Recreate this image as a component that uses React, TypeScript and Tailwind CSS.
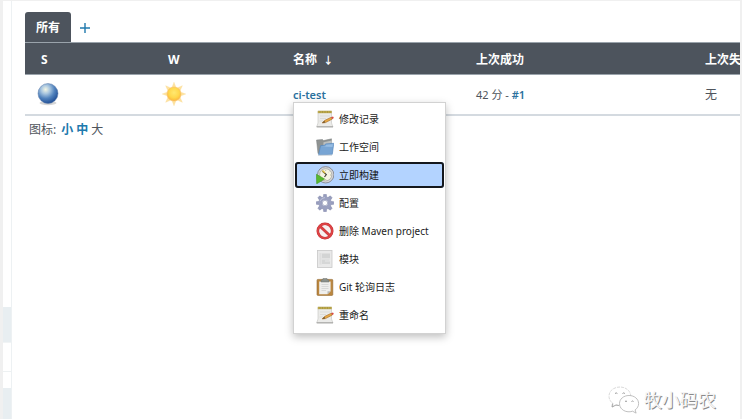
import type { ReactNode } from "react";

function BallIcon() {
  return (
    <svg viewBox="0 0 24 24" className="block size-6" aria-label="成功" role="img">
      <defs>
        <radialGradient id="ball" cx="0.38" cy="0.3" r="0.72">
          <stop offset="0" stopColor="#f3f6e4" />
          <stop offset="0.3" stopColor="#a9c6df" />
          <stop offset="0.62" stopColor="#5283bd" />
          <stop offset="1" stopColor="#1f4d94" />
        </radialGradient>
      </defs>
      <ellipse cx="11" cy="21" rx="8.5" ry="2.2" fill="#000" opacity="0.16" />
      <circle cx="11" cy="11.5" r="10" fill="url(#ball)" stroke="#5a7aa8" strokeWidth="0.5" />
    </svg>
  );
}

function SunIcon() {
  const rays = [0, 45, 90, 135, 180, 225, 270, 315];
  return (
    <svg viewBox="0 0 24 24" className="block size-6" aria-label="晴" role="img">
      <defs>
        <radialGradient id="sun" cx="0.5" cy="0.4" r="0.6">
          <stop offset="0" stopColor="#ffe870" />
          <stop offset="0.6" stopColor="#ffd84d" />
          <stop offset="1" stopColor="#fbb53c" />
        </radialGradient>
      </defs>
      {rays.map((a) => (
        <path key={a} d="M9.9 5.6 12 0.2 14.1 5.6Z" fill="#fde3a0" stroke="#fcd891" strokeWidth="0.3" transform={`rotate(${a} 12 12)`} />
      ))}
      <circle cx="12" cy="12" r="7" fill="url(#sun)" stroke="#f9bf6a" strokeWidth="0.6" />
    </svg>
  );
}

function MenuIcon({ children }: { children: ReactNode }) {
  return (
    <svg viewBox="0 0 18 18" className="size-[18px] shrink-0" aria-hidden="true">
      {children}
    </svg>
  );
}

function NotepadIcon() {
  return (
    <MenuIcon>
      <path d="M2 1.2H15.500V13L17 17H0.600L2 13Z" fill="#ebebe9" stroke="#c2c2bf" strokeWidth="0.6" />
      <path d="M0.800 16.800H17" stroke="#a2a2a0" strokeWidth="1" />
      <rect x="1.800" y="0.800" width="14" height="2.400" fill="#bda94c" />
      <path d="M4 1V3M6.500 1V3M9 1V3M11.500 1V3M14 1V3" stroke="#93843a" strokeWidth="0.5" />
      <path d="M4 6H14M4 8.500H10M3.500 11H7" stroke="#d6d6d3" strokeWidth="0.7" />
      <path d="M6.200 13 8.500 10.500 15.300 7.200 16.400 9 9.500 12.600Z" fill="#e6a743" stroke="#a86a24" strokeWidth="0.6" />
      <path d="M6.200 13 8.300 10.800 9.300 12.600Z" fill="#6b5230" />
      <path d="M15.100 7.300 17 6.500 17.900 8 16.300 9Z" fill="#d84a45" />
    </MenuIcon>
  );
}

function FolderIcon() {
  return (
    <MenuIcon>
      <path d="M0.500 2 6.500 1.500 7.500 2.600 15.500 0.800 15.800 15 2 15.500Z" fill="#8f9392" stroke="#7d8181" strokeWidth="0.5" />
      <path d="M7.500 4.200 15.800 2.600V12H7Z" fill="#bcc0c0" />
      <path d="M4.600 7.600 8.600 7.300 9.600 5.900 17.800 5.300 16.300 16.300 2.600 16.800Z" fill="#78a5d4" stroke="#4f83ba" strokeWidth="0.6" />
      <path d="M5.300 8.500 9.300 8.200 10.200 6.800 16.900 6.200 16.500 9Z" fill="#97bde3" />
      <path d="M2 17.300H16" stroke="#bdc6cf" strokeWidth="0.7" />
    </MenuIcon>
  );
}

function BuildIcon() {
  return (
    <MenuIcon>
      <circle cx="9.700" cy="8.800" r="8.200" fill="#d3d4d8" stroke="#82868e" strokeWidth="0.9" />
      <circle cx="9.700" cy="8.800" r="6.100" fill="#f6f4e2" stroke="#a9a9a4" strokeWidth="0.8" />
      <path d="M9.700 3.800V5M9.700 13V14M14 9H15M13.300 5.500 12.700 6.100" stroke="#9d9d92" strokeWidth="0.7" />
      <path d="M6.500 5.200 10.300 8.500 8.500 11" fill="none" stroke="#4b483c" strokeWidth="1.200" />
      <path d="M6.500 4.500 9 7" stroke="#d9ba38" strokeWidth="1.400" />
      <path d="M0.400 8.300 8.600 13 0.700 17.800Z" fill="#58b82f" stroke="#42981f" strokeWidth="0.6" />
    </MenuIcon>
  );
}

function GearIcon() {
  const teeth = [0, 45, 90, 135, 180, 225, 270, 315];
  return (
    <MenuIcon>
      {teeth.map((a) => (
        <path key={a} d="M7 4 7.700 0.200H10.300L11 4Z" fill="#969cbc" stroke="#7d84a8" strokeWidth="0.4" transform={`rotate(${a} 9 9)`} />
      ))}
      <circle cx="9" cy="9" r="4.700" fill="none" stroke="#9ba1c0" strokeWidth="3.600" />
      <circle cx="9" cy="9" r="2.700" fill="#fff" stroke="#8086a9" strokeWidth="0.6" />
      <path d="M4 7A5.500 5.500 0 0 1 9 3.600" stroke="#bfc3da" fill="none" strokeWidth="1" />
    </MenuIcon>
  );
}

function ForbiddenIcon() {
  return (
    <MenuIcon>
      <circle cx="9" cy="9" r="7.200" fill="#f7f1f1" stroke="#bf2a2e" strokeWidth="2.600" />
      <path d="M4 4.200 14 13.800" stroke="#bf2a2e" strokeWidth="2.600" />
      <circle cx="9" cy="9" r="7.200" fill="none" stroke="#de4446" strokeWidth="1.800" />
      <path d="M4 4.200 14 13.800" stroke="#de4446" strokeWidth="1.800" />
    </MenuIcon>
  );
}

function ModuleIcon() {
  return (
    <MenuIcon>
      <rect x="1.500" y="0.500" width="14.500" height="17" fill="#e9e9e9" stroke="#c8c8c8" strokeWidth="0.8" />
      <rect x="3.500" y="3" width="2" height="11.500" fill="#dedede" />
      <rect x="6" y="3.500" width="8" height="4.800" fill="#d3d4d4" />
      <rect x="6" y="9.500" width="8" height="4.500" fill="#d6d7d7" />
      <path d="M9 11H14V9.500" stroke="#eee" strokeWidth="0.8" fill="none" />
    </MenuIcon>
  );
}

function ClipboardIcon() {
  return (
    <MenuIcon>
      <rect x="1" y="1.400" width="15.800" height="16" rx="0.8" fill="#bb873f" stroke="#906630" strokeWidth="0.6" />
      <path d="M3.200 3.400H14.600V13.200L11.500 16.200H3.200Z" fill="#efefed" />
      <path d="M14.600 13.200 11.500 16.200V13.200Z" fill="#b7b8b6" />
      <path d="M5.500 6.500H12.500M5.500 8.500H12.500M5.500 10.500H12.500M5.500 12.500H10" stroke="#cfd0ce" strokeWidth="0.7" />
      <path d="M5 4V2.200L7 1.500V.4H11V1.500L13 2.200V4Z" fill="#8b918c" stroke="#6d736e" strokeWidth="0.5" />
    </MenuIcon>
  );
}

function WeChatIcon() {
  return (
    <svg viewBox="0 0 32 28" className="h-7 w-8" aria-hidden="true">
      <g fill="#fff" stroke="#cfcfcf" strokeWidth="0.8">
        <path d="M12 1C5.500 1 1 5.200 1 10.200c0 3 1.600 5.600 4.100 7.300L4 21l4-2c1.300.4 2.700.5 4 .5 6 0 10.700-4.100 10.700-9.300S18 1 12 1Z" strokeDasharray="3 1" />
        <path d="M4.500 17.500 4 21l4-2 3 .5" fill="none" stroke="#999" />
        <path d="M21 9.500c-5.500 0-9.500 3.600-9.500 8.100s4 8.200 9.500 8.200c1.200 0 2.400-.2 3.500-.6l3.600 1.900-1-3.200c2.200-1.500 3.500-3.700 3.500-6.300 0-4.500-4.100-8.100-9.600-8.100Z" stroke="#b0b0b0" />
      </g>
      <path d="M7 7.500q1.200-1.200 2.400 0M14.500 7.500q1.200-1.200 2.400 0M17 15.500q1-1 2 0M23.500 15.500q1-1 2 0" fill="none" stroke="#999" strokeWidth="1" />
    </svg>
  );
}

const menuItems = [
  { label: "修改记录", icon: <NotepadIcon /> },
  { label: "工作空间", icon: <FolderIcon /> },
  { label: "立即构建", icon: <BuildIcon />, active: true },
  { label: "配置", icon: <GearIcon /> },
  { label: "删除 Maven project", icon: <ForbiddenIcon /> },
  { label: "模块", icon: <ModuleIcon /> },
  { label: "Git 轮询日志", icon: <ClipboardIcon /> },
  { label: "重命名", icon: <NotepadIcon /> },
];

function JobMenu() {
  return (
    <ul className="absolute top-[15px] left-0 z-10 w-[153px] border border-[#d2d2d2] bg-white px-px pt-[3px] pb-[5px] shadow-[0_3px_8px_rgba(0,0,0,0.25)]">
      {menuItems.map((item) => (
        <li key={item.label} className="pb-0.5 last:pb-0">
          <button
            type="button"
            className={
              item.active
                ? "flex h-[26px] w-full items-center gap-[5px] rounded-[3px] bg-[#b3d3ff] pl-[21px] text-[10px] leading-4 whitespace-nowrap text-[#111] outline-2 -outline-offset-2 outline-[#15181d]"
                : "flex h-[26px] w-full items-center gap-[5px] pl-[21px] text-[10px] leading-4 whitespace-nowrap text-[#222]"
            }
          >
            {item.icon}
            <span>{item.label}</span>
          </button>
        </li>
      ))}
    </ul>
  );
}

export default function App() {
  return (
    <div className="relative flex min-h-screen overflow-hidden border-t border-r-2 border-l-[3px] border-[#f0f0f0] bg-white font-['Noto_Sans','Noto_Sans_CJK_SC',sans-serif] text-xs leading-4 text-[#4f555c]">
      <aside className="flex w-[9px] shrink-0 flex-col border-r border-[#edf1f3]">
        <div className="h-[306px]" />
        <div className="h-9 border-b border-[#f1f4f5] bg-[#e8eef1]" />
        <div className="h-[29px] border-b border-[#edf1f2]" />
        <div className="h-4" />
        <div className="flex-1 bg-[#e8eef1]" />
      </aside>

      <main className="min-w-0 flex-1 pt-[11px] pl-[13px]">
        <nav className="flex h-[30px] items-stretch">
          <a href="#all" className="flex items-center rounded-t-[3px] bg-[#4d545d] px-[11px] pt-0.5 font-bold text-white">
            所有
          </a>
          <a href="#new" aria-label="新建视图" className="flex items-center px-[9px] pt-0.5">
            <svg viewBox="0 0 10 10" className="size-2.5" aria-hidden="true">
              <path d="M5 0V10M0 5H10" stroke="#2079ad" strokeWidth="1.4" />
            </svg>
          </a>
        </nav>

        <table className="w-full table-fixed border-collapse text-left whitespace-nowrap">
          <colgroup>
            <col className="w-[127px]" />
            <col className="w-[125px]" />
            <col className="w-[183px]" />
            <col className="w-[229px]" />
            <col />
          </colgroup>
          <thead>
            <tr className="h-8 border-y border-[#9aa3ab] bg-[#4d545d] text-white">
              <th className="p-0 pt-0.5 pl-4">S</th>
              <th className="p-0 pt-0.5 pl-4">W</th>
              <th className="p-0 pt-0.5 pl-4">
                名称 &nbsp;<span className="text-[10px]">↓</span>
              </th>
              <th className="p-0 pt-0.5 pl-4">上次成功</th>
              <th className="p-0 pt-0.5 pl-4">上次失</th>
            </tr>
          </thead>
          <tbody>
            <tr className="h-10 border-b-2 border-[#d4dae0]">
              <td className="p-0 pl-3">
                <BallIcon />
              </td>
              <td className="p-0 pl-2.5">
                <SunIcon />
              </td>
              <td className="p-0 pt-0.5 pl-4 text-[11px]">
                <div className="relative">
                  <a href="#ci-test" className="font-semibold text-[#2b719e]">
                    ci-test
                  </a>
                  <JobMenu />
                </div>
              </td>
              <td className="p-0 pt-0.5 pl-4 text-[11px]">
                42 分 -{" "}
                <a href="#1" className="font-semibold text-[#2b719e]">
                  #1
                </a>
              </td>
              <td className="p-0 pt-0.5 pl-4">无</td>
            </tr>
          </tbody>
        </table>

        <div className="flex gap-[3px] pt-1.5 pl-1">
          <span className="pr-0.5">图标:</span>
          <a href="#small" className="font-bold text-[#2079ad]">
            小
          </a>
          <a href="#medium" className="font-bold text-[#2079ad]">
            中
          </a>
          <span>大</span>
        </div>
      </main>

      <div className="absolute right-6 bottom-[5px] flex items-center gap-1">
        <WeChatIcon />
        <span className="text-lg leading-7 text-[#f4f4f4] [text-shadow:1px_1px_0_#8a8a8a]">牧小码农</span>
      </div>
    </div>
  );
}
